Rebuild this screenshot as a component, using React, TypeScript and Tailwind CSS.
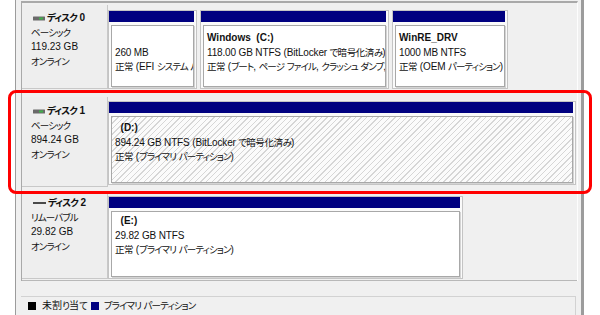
import React from "react";

const FONT = "font-['Liberation_Sans','Noto_Sans_CJK_JP',sans-serif] [font-feature-settings:'palt']";

// kana in the screenshot are condensed (Meiryo UI), kanji are close to full width
function Jp({ text, wide }: { text: string; wide?: boolean }) {
  const parts = text.split(/([\u3040-\u30ff]+|[\u4e00-\u9fff]+)/).filter(Boolean);
  return (
    <>
      {parts.map((p, i) =>
        /[\u3040-\u30ff]/.test(p) ? (
          <span key={i} className="text-[9.5px] tracking-[-0.9px]">
            {p}
          </span>
        ) : /[\u4e00-\u9fff]/.test(p) ? (
          <span key={i} className={wide ? "text-[10px]" : "text-[9.5px] tracking-[-0.4px]"}>
            {p}
          </span>
        ) : (
          <span key={i} className="tracking-[-0.15px]">
            {p}
          </span>
        )
      )}
    </>
  );
}

function DiskIcon({ removable }: { removable?: boolean }) {
  if (removable) {
    return (
      <svg width="13" height="4" viewBox="0 0 13 4" className="shrink-0">
        <rect x="0" y="1" width="13" height="2" fill="#4a4a4a" />
      </svg>
    );
  }
  return (
    <svg width="12" height="5" viewBox="0 0 12 5" className="shrink-0">
      <rect x="0" y="0.5" width="12" height="4" rx="0.5" fill="#6a6a6a" />
      <rect x="6" y="1.5" width="4" height="2" fill="#3fb04a" />
    </svg>
  );
}

function DiskLabel({
  name,
  kind,
  size,
  removable,
  className,
}: {
  name: string;
  kind: string;
  size: string;
  removable?: boolean;
  className: string;
}) {
  return (
    <div className={`w-[86px] shrink-0 border-r border-b border-[#c8c8c8] bg-[#eeeeee] pl-[9px] leading-[14.5px] ${className}`}>
      <div className="flex h-[14.5px] items-center gap-[2px] pl-[2px] font-bold">
        <DiskIcon removable={removable} />
        <span>
          <Jp text={name} />
        </span>
      </div>
      <div className="h-[14.5px]">
        <Jp text={kind} />
      </div>
      <div className="h-[14.5px]">{size}</div>
      <div className="h-[14.5px]">
        <Jp text="オンライン" />
      </div>
    </div>
  );
}

function Partition({
  lines,
  className,
  hatched,
  pad,
}: {
  lines: string[];
  className: string;
  hatched?: boolean;
  pad: string;
}) {
  return (
    <div className={`flex flex-col border border-[#c4c4c4] bg-[#fafafa] pr-[2px] pb-[1px] ${className}`}>
      <div className="h-[11px] shrink-0 bg-[#000080]" />
      <div
        className={`mt-[3px] ml-[2px] min-h-0 flex-1 overflow-hidden whitespace-nowrap border border-[#a8a8a8] pl-[3px] leading-[14.5px] shadow-[1px_1px_0_#d4d4d4] ${pad} ${
          hatched
            ? "bg-[image:repeating-linear-gradient(135deg,#d6d6d6_0px,#d6d6d6_1px,#fbfbfb_1px,#fbfbfb_4px)]"
            : "bg-white"
        }`}
      >
        <div className="h-[14.5px] font-bold">{lines[0]}</div>
        <div className="h-[14.5px]">
          <Jp text={lines[1]} />
        </div>
        <div className="h-[14.5px]">
          <Jp text={lines[2]} />
        </div>
      </div>
    </div>
  );
}

export default function App() {
  return (
    <div className={`relative h-[315px] w-[600px] overflow-hidden bg-white text-[10px] text-[#111] ${FONT}`}>
      <div className="ml-[15px] flex h-full w-[569px] flex-col border-r-[3px] border-l border-[#9c9c9c] bg-[#f0f0f0] pl-[5px] pr-[3px]">
        <div className="mt-px flex flex-col border-t-2 border-r border-l border-[#a9a9a9] border-r-[#fdfdfd]">
          {/* disk 0 */}
          <div className="flex h-[89px]">
            <DiskLabel name="ディスク 0" kind="ベーシック" size="119.23 GB" className="mt-[2px] h-[84px] pt-[6px]" />
            <div className="mt-[7px] flex h-[79px] gap-[3px]">
              <Partition
                className="w-[89px]"
                pad="pt-[5px]"
                lines={["", "260 MB", "正常 (EFI システム パーティション)"]}
              />
              <Partition
                className="w-[189px]"
                pad="pt-[5px]"
                lines={[
                  "Windows\u00a0\u00a0(C:)",
                  "118.00 GB NTFS (BitLocker で暗号化済み)",
                  "正常 (ブート, ページ ファイル, クラッシュ ダンプ, ベーシック データ パーティション)",
                ]}
              />
              <Partition
                className="w-[116px]"
                pad="pt-[5px]"
                lines={["WinRE_DRV", "1000 MB NTFS", "正常 (OEM パーティション)"]}
              />
            </div>
          </div>
          {/* disk 1 */}
          <div className="flex h-[98px]">
            <DiskLabel name="ディスク 1" kind="ベーシック" size="894.24 GB" className="mt-[5px] h-[90px] pt-[7px]" />
            <Partition
              className="mt-[9px] mr-px h-[84px] flex-1"
              pad="pt-[4px]"
              hatched
              lines={["\u00a0\u00a0(D:)", "894.24 GB NTFS (BitLocker で暗号化済み)", "正常 (プライマリ パーティション)"]}
            />
          </div>
          {/* disk 2 */}
          <div className="flex h-[91px] border-b border-[#b8b8b8]">
            <DiskLabel
              name="ディスク 2"
              kind="リムーバブル"
              size="29.82 GB"
              removable
              className="mt-px h-[88px] pt-[5px]"
            />
            <Partition
              className="mt-[6px] h-[83px] w-[355px]"
              pad="pt-[2px]"
              lines={["\u00a0\u00a0(E:)", "29.82 GB NTFS", "正常 (プライマリ パーティション)"]}
            />
          </div>
        </div>
        <div className="h-[15px] shrink-0" />
        <div className="mr-[2px] flex flex-1 items-start gap-[4px] border-t border-r border-[#d2d2d2] pt-[2px] pl-[7px] leading-[14px]">
          <div className="flex items-center gap-[6px]">
            <span className="h-[8px] w-[8px] bg-black" />
            <span>
              <Jp text="未割り当て" wide />
            </span>
          </div>
          <div className="flex items-center gap-[5px]">
            <span className="h-[8px] w-[8px] bg-[#000080]" />
            <span>
              <Jp text="プライマリ パーティション" />
            </span>
          </div>
        </div>
      </div>
      {/* highlight */}
      <div className="pointer-events-none absolute top-[90px] left-[8px] h-[104px] w-[584px] rounded-[8px] border-[3px] border-[#ff0000]" />
    </div>
  );
}
